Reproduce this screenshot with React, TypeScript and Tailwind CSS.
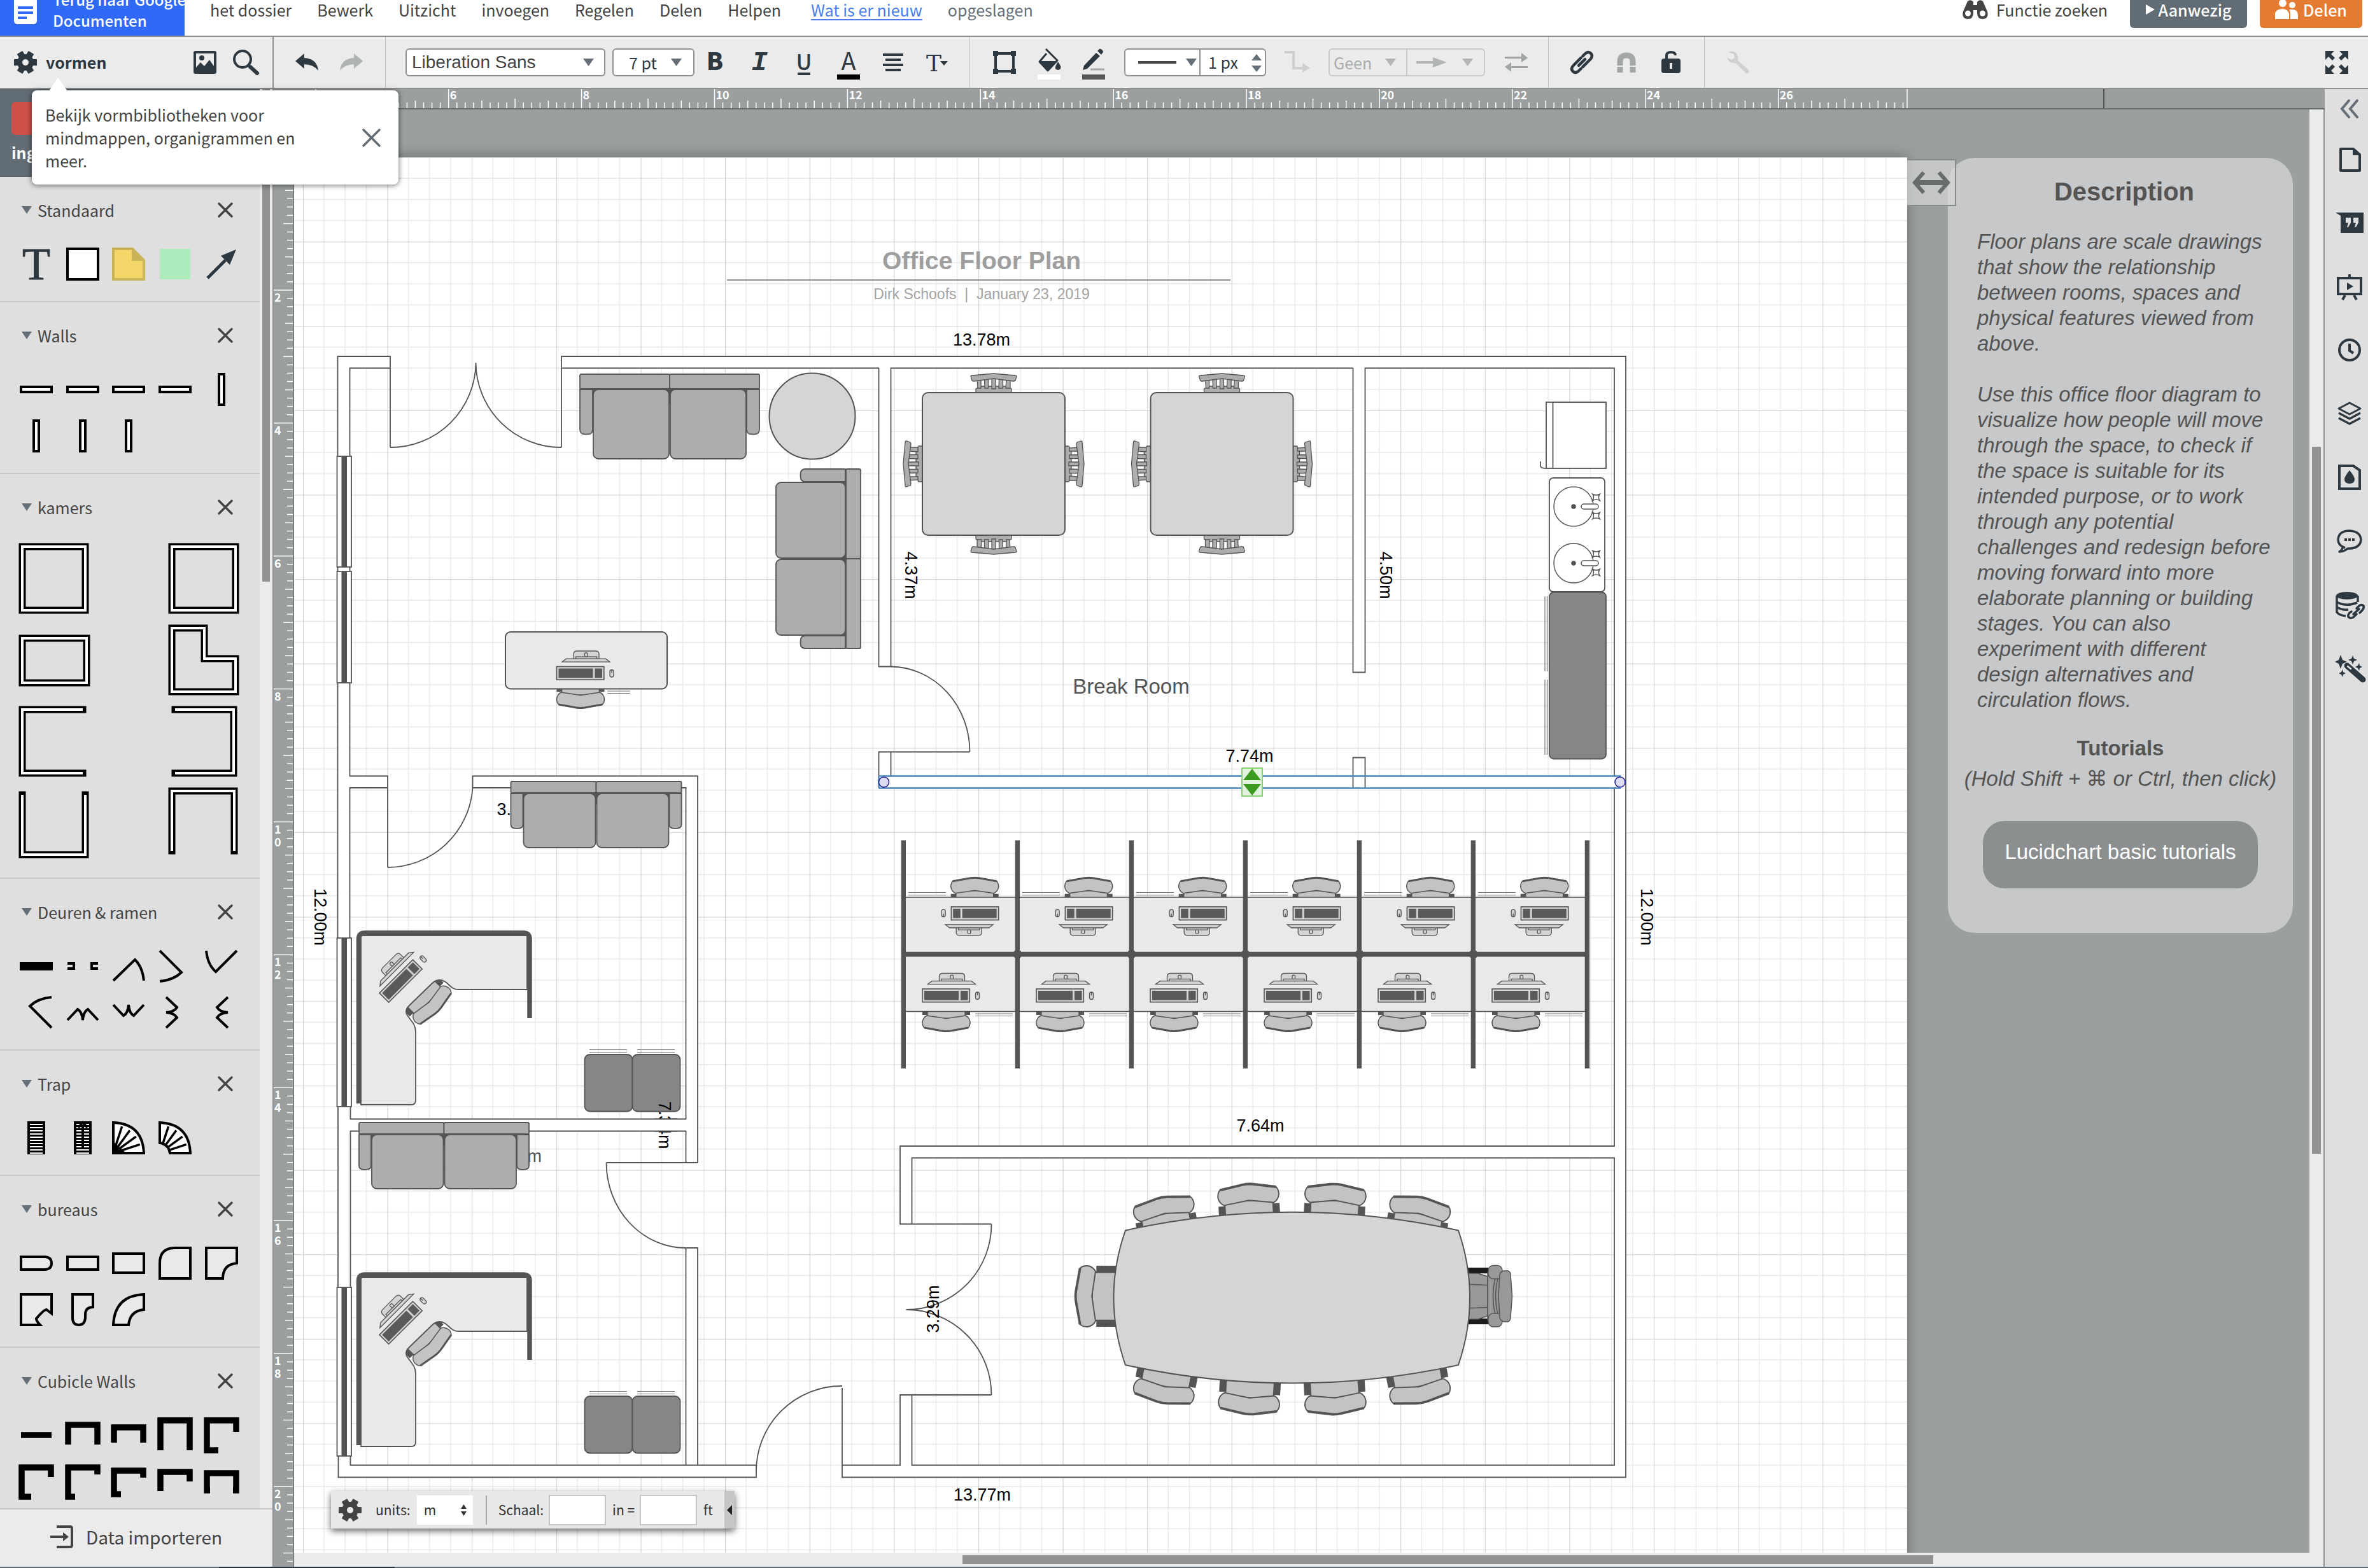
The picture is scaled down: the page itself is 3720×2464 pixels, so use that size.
import React from "react";

const UI = "font-['Noto_Sans_CJK_SC','Noto_Sans',sans-serif]";
const ARIAL = "font-['Liberation_Sans',Arial,sans-serif]";
const LINE = "#545454";
const INK = "#2e3840";

type Kids = { children?: React.ReactNode };

/* ---------- small building blocks ---------- */

function Icon({ w = 36, h = 36, children }: { w?: number; h?: number } & Kids) {
  return (
    <svg width={w} height={h} viewBox={`0 0 ${w} ${h}`} fill="none" aria-hidden="true" className="block shrink-0 overflow-visible">
      {children}
    </svg>
  );
}

function IconButton({ label, children, disabled }: { label: string; disabled?: boolean } & Kids) {
  return (
    <button type="button" aria-label={label} title={label} disabled={disabled} className="flex h-20 w-9 shrink-0 items-center justify-center">
      {children}
    </button>
  );
}

function Caret({ color = "#666f78" }: { color?: string }) {
  return (
    <Icon w={17} h={12}>
      <path d="M0 0H17L8.5 12Z" fill={color} />
    </Icon>
  );
}

function Gear({ color = INK }: { color?: string }) {
  return (
    <Icon>
      <g fill={color}>
        {[30, 90, 150].map((a) => (
          <rect key={a} x="13" y="0" width="10" height="36" rx="1" transform={`rotate(${a} 18 18)`} />
        ))}
        <circle cx="18" cy="18" r="13" />
      </g>
      <circle cx="18" cy="18" r="5" fill="#ebebeb" />
    </Icon>
  );
}

function Cross({ size = 24, color = "#444" }: { size?: number; color?: string }) {
  return (
    <Icon w={size} h={size}>
      <path d={`M2 2L${size - 2} ${size - 2}M${size - 2} 2L2 ${size - 2}`} stroke={color} strokeWidth="3.5" strokeLinecap="round" />
    </Icon>
  );
}

/* ---------- header ---------- */

const MENU = ["het dossier", "Bewerk", "Uitzicht", "invoegen", "Regelen", "Delen", "Helpen"];

function Header() {
  return (
    <header className="flex h-14 shrink-0 items-end overflow-hidden bg-white text-[25px] leading-[30px] text-[#444]">
      <a href="#docs" className="flex h-[100px] w-[290px] shrink-0 items-end gap-[25px] bg-[#3069f6] pl-[22px] pb-2 text-[24px] font-medium leading-[33px] text-white">
        <span className="pb-[10px]">
          <Icon w={36} h={50}>
            <rect width="36" height="50" rx="5" fill="#fff" />
            <path d="M6 24H30M6 32H30M6 40H20" stroke="#3069f6" strokeWidth="4" />
          </Icon>
        </span>
        <span className="whitespace-nowrap">
          Terug naar Google
          <br />
          Documenten
        </span>
      </a>
      <nav className="flex items-center pb-[26px] pl-10">
        <ul className="flex gap-10">
          {MENU.map((m) => (
            <li key={m}>
              <button type="button">{m}</button>
            </li>
          ))}
        </ul>
        <a href="#new" className="ml-[47px] text-[#4a7eee] underline decoration-2 underline-offset-4">
          Wat is er nieuw
        </a>
        <span className="ml-10 text-[#666f78]">opgeslagen</span>
      </nav>
      <div className="ml-auto flex items-end pr-[9px]">
        <button type="button" className="flex items-center gap-3 pb-[26px]">
          <Icon w={42} h={30}>
            <path d="M9 2Q14 -2 18 3V8H24V3Q28 -2 33 2L40 18Q43 29 33 30Q24 30 24 20V16H18V20Q18 30 9 30Q-1 29 2 18Z" fill="#444" />
            <circle cx="9.500" cy="21" r="4.500" fill="#fff" />
            <circle cx="32.500" cy="21" r="4.500" fill="#fff" />
          </Icon>
          Functie zoeken
        </button>
        <button type="button" className="mb-3 ml-[35px] flex h-[58px] w-[184px] items-center justify-center gap-[6px] rounded-[6px] bg-[#626c75] font-medium text-white">
          <Icon w={14} h={16}>
            <path d="M0 0L14 8L0 16Z" fill="#fff" />
          </Icon>
          Aanwezig
        </button>
        <button type="button" className="mb-3 ml-5 flex h-[58px] w-[161px] items-center justify-center gap-2 rounded-[6px] bg-[#e47b30] font-medium text-white">
          <Icon w={36} h={30}>
            <g fill="#fff">
              <circle cx="12" cy="5" r="6" />
              <circle cx="27" cy="8" r="5" />
              <path d="M0 30V22Q1 14 12 14Q20 14 22 22V30Z" />
              <path d="M24 30V22Q24 18 22 15Q36 13 36 24V30Z" />
            </g>
          </Icon>
          Delen
        </button>
      </div>
    </header>
  );
}

/* ---------- toolbar ---------- */

function GlyphIcon({ ch, cls, children }: { ch: string; cls: string } & Kids) {
  return (
    <Icon w={36} h={48}>
      <text x="18" y="36" textAnchor="middle" fill={INK} className={cls}>
        {ch}
      </text>
      {children}
    </Icon>
  );
}

function Toolbar() {
  return (
    <div role="toolbar" aria-label="Opmaak" className="flex h-21 shrink-0 items-stretch border-y-2 border-[#8e9091] bg-[#ebebeb] text-[25px] text-[#2e3840]">
      <div className="flex w-[430px] shrink-0 items-center border-r-2 border-[#8e9091] pl-[22px] pr-6">
        <Gear />
        <span className="ml-[14px] font-bold">vormen</span>
        <div className="ml-auto flex gap-7">
          <IconButton label="Afbeelding">
            <Icon>
              <rect width="36" height="36" rx="3" fill={INK} />
              <rect x="4" y="4" width="28" height="28" fill="#ebebeb" />
              <circle cx="13" cy="11" r="4" fill={INK} />
              <path d="M4 32V26L11 18L17 24L25 14L32 24V32Z" fill={INK} />
            </Icon>
          </IconButton>
          <IconButton label="Zoeken">
            <Icon w={40} h={40}>
              <circle cx="15" cy="15" r="13" stroke={INK} strokeWidth="4" />
              <path d="M27 27L38 37" stroke={INK} strokeWidth="6" strokeLinecap="round" />
            </Icon>
          </IconButton>
        </div>
      </div>
      <div className="flex w-[176px] shrink-0 items-center gap-[34px] border-r border-[#bfbfbf] pl-[34px]">
        <IconButton label="Ongedaan maken">
          <Icon h={28}>
            <path d="M0 12L14 0V7Q34 8 36 27Q28 17 14 17V24Z" fill={INK} />
          </Icon>
        </IconButton>
        <IconButton label="Opnieuw" disabled>
          <Icon h={28}>
            <path d="M36 12L22 0V7Q2 8 0 27Q8 17 22 17V24Z" fill="#b0b3b3" />
          </Icon>
        </IconButton>
      </div>
      <div className="flex shrink-0 items-center border-r border-[#bfbfbf] pl-[31px] pr-8">
        <div className="relative">
          <select aria-label="Lettertype" className={`h-11 w-[314px] appearance-none rounded-[6px] border-2 border-[#8e9091] bg-white pl-2 text-[28px] leading-8 text-[#444] ${ARIAL}`}>
            <option>Liberation Sans</option>
          </select>
          <span className="pointer-events-none absolute right-[18px] top-4">
            <Caret />
          </span>
        </div>
        <div className="relative ml-[11px]">
          <select aria-label="Tekengrootte" className="h-11 w-[129px] appearance-none rounded-[6px] border-2 border-[#8e9091] bg-white pl-6 text-[25px] leading-8">
            <option>7 pt</option>
          </select>
          <span className="pointer-events-none absolute right-5 top-4">
            <Caret />
          </span>
        </div>
        <div className="ml-[14px] flex gap-[34px]">
          <IconButton label="Vet">
            <GlyphIcon ch="B" cls="font-['Noto_Sans_CJK_SC'] text-[38px] font-black" />
          </IconButton>
          <IconButton label="Cursief">
            <GlyphIcon ch="I" cls="font-['Liberation_Mono'] text-[42px] font-bold italic" />
          </IconButton>
          <IconButton label="Onderstrepen">
            <GlyphIcon ch="U" cls="font-['Noto_Sans_CJK_SC'] text-[34px] font-medium">
              <path d="M8 42H28" stroke={INK} strokeWidth="4" />
            </GlyphIcon>
          </IconButton>
          <IconButton label="Tekstkleur">
            <GlyphIcon ch="A" cls="font-['Noto_Sans_CJK_SC'] text-[38px]">
              <rect y="43" width="36" height="8" fill="#000" />
            </GlyphIcon>
          </IconButton>
          <IconButton label="Uitlijnen">
            <Icon w={32} h={28}>
              <path d="M0 2H32M4 10H28M0 18H32M4 26H28" stroke={INK} strokeWidth="4" />
            </Icon>
          </IconButton>
          <IconButton label="Tekstopties">
            <Icon>
              <text x="12" y="32" textAnchor="middle" fill={INK} className="font-['DejaVu_Serif'] text-[36px]">
                T
              </text>
              <path d="M22 16H34L28 23Z" fill={INK} />
            </Icon>
          </IconButton>
        </div>
      </div>
      <div className="flex shrink-0 items-center border-r border-[#bfbfbf] pl-9 pr-8">
        <div className="flex gap-[34px]">
          <IconButton label="Vorm">
            <Icon>
              <rect x="4" y="4" width="28" height="28" stroke={INK} strokeWidth="4" />
              <path d="M0 0H8V8H0ZM28 0H36V8H28ZM0 28H8V36H0ZM28 28H36V36H28Z" fill={INK} />
            </Icon>
          </IconButton>
          <IconButton label="Vulkleur">
            <Icon w={36} h={46}>
              <path d="M13 2L31 20L16 36L3 22L14 9" stroke={INK} strokeWidth="3" strokeLinejoin="round" />
              <path d="M3 21H30L16 36Z" fill={INK} />
              <path d="M32 22Q38 30 36 33Q32 37 28 33Q27 30 32 22Z" fill={INK} />
              <rect y="42" width="36" height="8" fill="#fff" />
            </Icon>
          </IconButton>
          <IconButton label="Lijnkleur">
            <Icon w={36} h={46}>
              <path d="M22 8L28 13L8 33L1 35L3 28ZM24 5L27 2Q29 1 32 4Q34 7 32 8L30 11Z" fill={INK} />
              <path d="M13 34H35" stroke="#a4a7a8" strokeWidth="3" />
              <rect y="42" width="36" height="8" fill="#585858" />
            </Icon>
          </IconButton>
        </div>
        <div className="ml-[30px] flex h-11 w-[223px] overflow-hidden rounded-[6px] border-2 border-[#8e9091] bg-white">
          <button type="button" aria-label="Lijnstijl" className="flex w-[118px] items-center justify-between border-r-2 border-[#8e9091] pl-5 pr-1">
            <Icon w={60} h={4}>
              <path d="M0 2H60" stroke="#444" strokeWidth="4" />
            </Icon>
            <Caret />
          </button>
          <input aria-label="Lijndikte" defaultValue="1 px" className="w-[80px] bg-white pl-[12px] outline-none" />
          <Icon w={16} h={40}>
            <path d="M0 17L8 7L16 17ZM0 25H16L8 35Z" fill="#666f78" />
          </Icon>
        </div>
        <div className="ml-[29px]">
          <Icon w={40} h={36}>
            <path d="M0 2H14V27H30" stroke="#cdcfcf" strokeWidth="4" />
            <path d="M28 19L40 27L28 34Z" fill="#cdcfcf" />
          </Icon>
        </div>
        <div className="ml-[29px] flex h-11 w-[246px] rounded-[6px] border-2 border-[#c9caca] text-[#a9acad]">
          <div className="relative w-[122px] border-r-2 border-[#c9caca]">
            <select disabled aria-label="Lijnbegin" className="h-10 w-[118px] appearance-none bg-transparent pl-[6px] leading-8 opacity-100 disabled:opacity-100">
              <option>Geen</option>
            </select>
            <span className="pointer-events-none absolute right-4 top-[14px]">
              <Caret color="#b3b6b7" />
            </span>
          </div>
          <button type="button" disabled aria-label="Lijneinde" className="flex flex-1 items-center justify-between pl-[14px] pr-[17px]">
            <Icon w={48} h={16}>
              <path d="M0 6H26V0L48 8L26 16V10H0Z" fill="#b3b6b7" />
            </Icon>
            <Caret color="#b3b6b7" />
          </button>
        </div>
        <div className="ml-[31px]">
          <IconButton label="Omdraaien" disabled>
            <Icon h={30}>
              <path d="M0 6H26V0L36 8L26 15V9H0ZM36 24H10V30L0 22L10 15V21H36Z" fill="#9fa3a4" />
            </Icon>
          </IconButton>
        </div>
      </div>
      <div className="flex shrink-0 items-center gap-[34px] border-r border-[#bfbfbf] px-[34px]">
        <IconButton label="Koppeling">
          <Icon>
            <g transform="rotate(-45 18 18)" stroke={INK} strokeWidth="4.500">
              <path d="M22 12H6Q-2 12 -2 18Q-2 24 6 24H10" strokeLinecap="round" />
              <path d="M26 12H30Q38 12 38 18Q38 24 30 24H14" strokeLinecap="round" />
              <path d="M11 18H25" strokeLinecap="round" />
            </g>
          </Icon>
        </IconButton>
        <IconButton label="Magneet">
          <Icon w={30} h={32}>
            <path d="M5 32V15Q5 5 15 5Q25 5 25 15V32" stroke="#a4a7a8" strokeWidth="9" />
            <path d="M0 22H30" stroke="#ebebeb" strokeWidth="2" />
          </Icon>
        </IconButton>
        <IconButton label="Vergrendelen">
          <Icon w={30} h={36}>
            <rect y="12" width="30" height="23" rx="4" fill={INK} />
            <path d="M8 13V7Q8 2 15 2Q22 2 22 7" stroke={INK} strokeWidth="4" />
            <path d="M15 19V28" stroke="#ebebeb" strokeWidth="4" />
          </Icon>
        </IconButton>
      </div>
      <div className="flex flex-1 items-center justify-between pl-[34px] pr-[31px]">
        <IconButton label="Gereedschap" disabled>
          <Icon>
            <path d="M3 2Q14 -2 18 8Q19 12 18 15L35 30Q37 35 32 36L14 19Q4 20 1 10L8 14L13 11L12 5Z" fill="#cfd1d1" />
          </Icon>
        </IconButton>
        <IconButton label="Volledig scherm">
          <Icon>
            <path d="M0 0H14L9 5L15 11L11 15L5 9L0 14ZM36 0V14L31 9L25 15L21 11L27 5L22 0ZM0 36V22L5 27L11 21L15 25L9 31L14 36ZM36 36H22L27 31L21 25L25 21L31 27L36 22Z" fill={INK} />
          </Icon>
        </IconButton>
      </div>
    </div>
  );
}

/* ---------- shape library ---------- */

function Cell({ children }: Kids) {
  return (
    <li className="flex h-[73px] items-center justify-center">
      <svg width="60" height="60" viewBox="-30 -30 60 60" fill="none" aria-hidden="true" className="overflow-visible">
        {children}
      </svg>
    </li>
  );
}

function Section({ title, children, rooms }: { title: string; rooms?: boolean } & Kids) {
  return (
    <section className="shrink-0 border-b-2 border-[#c8c8c8] pb-[22px]">
      <div className="flex h-[100px] items-center justify-between pl-[34px] pr-[42px] pt-1">
        <h2 className="flex items-center gap-[9px] text-[25px] leading-9 text-[#444]">
          <Icon w={16} h={12}>
            <path d="M0 0H16L8 12Z" fill="#666f78" />
          </Icon>
          {title}
        </h2>
        <button type="button" aria-label={`${title} sluiten`}>
          <Cross />
        </button>
      </div>
      {rooms ? (
        <ul className="grid grid-cols-[auto_auto] justify-between pl-[30px] pr-8">{children}</ul>
      ) : (
        <ul className="grid grid-cols-5 pl-[21px] pr-6">{children}</ul>
      )}
    </section>
  );
}

function Room({ d }: { d: string }) {
  return (
    <li className="flex h-32 w-[112px] items-center">
      <svg width="112" height="110" viewBox="0 0 112 110" fill="none" aria-hidden="true" className="overflow-visible">
        <path d={d} stroke="#000" strokeWidth="11" strokeLinecap="square" />
        <path d={d} stroke="#fff" strokeWidth="4" />
      </svg>
    </li>
  );
}

const ROOMS = [
  "M5 5H104V105H5Z",
  "M6 5H106V105H6Z",
  "M5 21H106V91H5Z",
  "M6 5H57V53H106V105H6Z",
  "M100 5H5V105H100",
  "M11 5H103V105H11",
  "M5 11V105H104V11",
  "M6 99V5H104V99",
];

const DOORS = [
  "M-24 23L10 -10Q22 2 24 23",
  "M-24 -24L10 10Q-2 22 -24 24",
  "M-24 -24Q-22 -2 -9 9L24 -24",
  "M24 -24Q2 -22 -10 -10L24 24",
  "M-24 12L-8 -5Q-1 -1 0 12Q1 -1 8 -5L24 12",
  "M-24 -12L-8 5Q-1 1 0 -12Q1 1 8 5L24 -12",
  "M-14 -24L3 -8Q-1 -1 -14 0Q-1 1 3 8L-14 24",
  "M10 -24L-7 -8Q-3 -1 10 0Q-3 1 -7 8L10 24",
];

const DESKS = [
  "M-24 -10H14Q24 -9 24 0Q24 9 14 10H-24Z",
  "M-24 -10H24V10H-24Z",
  "M-24 -15H24V15H-24Z",
  "M-24 24V0Q-24 -24 0 -24H24V24Z",
  "M-24 -24H24V0Q2 2 2 24H-24Z",
  "M-24 -24H24V6L16 0Q12 0 0 14Q0 18 6 24H-24Z",
  "M-16 -24H16V-4Q4 -4 4 8V13Q3 24 -6 24Q-16 24 -16 13Z",
  "M-24 24Q-22 -22 24 -24V0Q2 2 0 24Z",
];

const CUBICLES = [
  "M-24 0H24",
  "M-23 15V-16H23V15",
  "M-23 12V-12H23V12",
  "M-23 24V-23H23V24",
  "M23 -5V-23H-23V24H-5",
  "M23 -7V-22H-23V24H-8",
  "M23 -11V-22H-23V24H-12",
  "M23 -6V-17H-23V20H-12",
  "M23 0V-15H-23V15",
  "M18 14H23V-13H-23V14H-18",
];

const RAYS = [0, 18, 36, 54, 72, 90];

function Sidebar() {
  return (
    <aside className="flex w-[430px] shrink-0 flex-col border-r-2 border-[#8e9091]">
      <div className="flex min-h-0 flex-1">
        <div className="flex min-w-0 flex-1 flex-col overflow-hidden bg-[#dfdfdf]">
          <div className="h-[138px] shrink-0 bg-[#626c75] pl-[18px] pt-5 text-[25px] font-bold text-white">
            <div className="h-[52px] w-[120px] rounded-[6px] bg-[#cd5149]" />
            <div className="mt-[9px] leading-9">ing</div>
          </div>
          <Section title="Standaard">
            <Cell>
              <text x="0" y="24" textAnchor="middle" fill={INK} className="font-['Liberation_Serif'] text-[72px] font-medium" stroke={INK} strokeWidth="1">
                T
              </text>
            </Cell>
            <Cell>
              <rect x="-24" y="-24" width="48" height="48" fill="#fff" stroke="#000" strokeWidth="4" />
            </Cell>
            <Cell>
              <path d="M-24 -24H6L24 -6V24H-24Z" fill="#f5d769" stroke="#c9b457" strokeWidth="4" />
              <path d="M5 -25V-5H25Z" fill="#c9b457" />
            </Cell>
            <Cell>
              <rect x="-24" y="-24" width="48" height="48" fill="#abebbc" />
            </Cell>
            <Cell>
              <path d="M-22 22L6 -6" stroke={INK} strokeWidth="5" />
              <path d="M23 -23L-1 -13L13 1Z" fill={INK} />
            </Cell>
          </Section>
          <Section title="Walls">
            {[0, 1, 2, 3].map((i) => (
              <Cell key={i}>
                <rect x="-24" y="-4" width="48" height="8" fill="#fff" stroke="#000" strokeWidth="4" />
              </Cell>
            ))}
            {[4, 5, 6, 7].map((i) => (
              <Cell key={i}>
                <rect x="-4" y="-24" width="8" height="48" fill="#fff" stroke="#000" strokeWidth="4" />
              </Cell>
            ))}
          </Section>
          <Section title="kamers" rooms>
            {ROOMS.map((d) => (
              <Room key={d} d={d} />
            ))}
          </Section>
          <Section title="Deuren &amp; ramen">
            <Cell>
              <rect x="-26" y="-6" width="52" height="13" fill="#000" />
            </Cell>
            <Cell>
              <path d="M-24 -4H-14V4H-24M24 -4H14V4H24" stroke="#000" strokeWidth="4" />
            </Cell>
            {DOORS.map((d) => (
              <Cell key={d}>
                <path d={d} stroke="#000" strokeWidth="4" />
              </Cell>
            ))}
          </Section>
          <Section title="Trap">
            {[0, 1].map((k) => (
              <Cell key={k}>
                <rect x="-14" y="-26" width="28" height="52" fill="#000" />
                {[0, 1, 2, 3, 4, 5, 6, 7, 8, 9].map((i) => (
                  <rect key={i} x="-10" y={-22 + i * 5} width="20" height="2" fill="#fff" />
                ))}
                {k === 1 && <path d="M0 16V-20M-7 -16L0 -24L7 -16" stroke="#000" strokeWidth="4" />}
              </Cell>
            ))}
            <Cell>
              <path d="M-24 24V-24Q22 -22 24 24Z" fill="#fff" stroke="#000" strokeWidth="4" />
              {RAYS.map((a) => (
                <path key={a} d="M-24 24H20" stroke="#000" strokeWidth="3.500" transform={`rotate(${-a} -24 24)`} />
              ))}
              <path d="M-24 24V6L-4 24Z" fill="#000" />
            </Cell>
            <Cell>
              <path d="M-24 8V-24Q22 -22 24 24H-8Q-10 10 -24 8Z" fill="#fff" stroke="#000" strokeWidth="4" />
              {RAYS.map((a) => (
                <path key={a} d="M-8 24H20" stroke="#000" strokeWidth="3.500" transform={`rotate(${-a} -24 24)`} />
              ))}
            </Cell>
          </Section>
          <Section title="bureaus">
            {DESKS.map((d) => (
              <Cell key={d}>
                <path d={d} fill="#e9e9e9" stroke="#000" strokeWidth="4" />
              </Cell>
            ))}
          </Section>
          <Section title="Cubicle Walls">
            {CUBICLES.map((d) => (
              <Cell key={d}>
                <path d={d} stroke="#000" strokeWidth="9.500" />
              </Cell>
            ))}
          </Section>
        </div>
        <div className="w-5 shrink-0 bg-[#ebebeb] px-1">
          <div className="h-[774px] w-3 bg-[#919191]" />
        </div>
      </div>
      <button type="button" className="flex h-[92px] shrink-0 items-center justify-center gap-5 border-t-2 border-[#c8c8c8] bg-[#ebebeb] pb-1 text-[28px] text-[#444]">
        <Icon>
          <path d="M10 2H31Q34 2 34 5V31Q34 34 31 34H10M0 18H24" stroke="#444" strokeWidth="4" />
          <path d="M20 11L29 18L20 25Z" fill="#444" />
        </Icon>
        Data importeren
      </button>
    </aside>
  );
}

/* ---------- rulers ---------- */

const UNIT = 104.45;

function tickLen(i: number, full: number) {
  if (i % 16 === 0) return full;
  if (i % 8 === 0) return 15;
  if (i % 4 === 0) return 12;
  return 9;
}

function TopRuler() {
  return (
    <div className="h-8 shrink-0 overflow-hidden border-b-2 border-[#6b7070] bg-[#9b9f9f]">
      <svg width="3222" height="30" viewBox="430 0 3222 30" aria-hidden="true" className="block">
        {Array.from({ length: 224 }, (_, i) => {
          const x = 78 + (i * UNIT) / 8;
          return <path key={i} d={`M${x} 30V${30 - tickLen(i, 30)}`} stroke="#fff" strokeWidth="1.500" />;
        })}
        <path d="M2996 0V30" stroke="#fff" strokeWidth="1.500" />
        <path d="M3305 0V30" stroke="#555" strokeWidth="2" />
        {[4, 6, 8, 10, 12, 14, 16, 18, 20, 22, 24, 26].map((n) => (
          <text key={n} x={80 + n * UNIT} y="16" fill="#fff" className="text-[18px] font-bold">
            {n}
          </text>
        ))}
      </svg>
    </div>
  );
}

function LeftRuler() {
  return (
    <div className="w-8 shrink-0 overflow-hidden border-r-2 border-[#7a7e7e] bg-[#9b9f9f]">
      <svg width="30" height="2290" viewBox="0 172 30 2290" aria-hidden="true" className="block">
        {Array.from({ length: 170 }, (_, i) => {
          const y = 247 + (i * UNIT) / 8;
          return <path key={i} d={`M30 ${y}H${30 - tickLen(i, 30)}`} stroke="#fff" strokeWidth="1.500" />;
        })}
        {[2, 4, 6, 8, 10, 12, 14, 16, 18, 20].map((n) =>
          String(n)
            .split("")
            .map((c, k) => (
              <text key={`${n}-${k}`} x="1" y={247 + n * UNIT + 18 + k * 20} fill="#fff" className="text-[18px] font-bold">
                {c}
              </text>
            )),
        )}
      </svg>
    </div>
  );
}

/* ---------- furniture ---------- */

function Sofa({ w, h, at }: { w: number; h: number; at: string }) {
  const b = h * 0.173;
  const a = w * 0.071;
  const half = w / 2;
  return (
    <g transform={at} fill="#adadad" stroke={LINE} strokeWidth="1.800">
      <rect x={a} y={b} width={w - 2 * a} height={b} fill={LINE} stroke="none" />
      <rect width={half} height={b} rx="2" />
      <rect x={half} width={half} height={b} rx="2" />
      <path d={`M0 ${b + 1}H${a}V${h * 0.65}Q${a} ${h * 0.71} ${a * 0.6} ${h * 0.71}H${a * 0.4}Q0 ${h * 0.71} 0 ${h * 0.65}Z`} />
      <path d={`M${w - a} ${b + 1}H${w}V${h * 0.65}Q${w} ${h * 0.71} ${w - a * 0.4} ${h * 0.71}H${w - a * 0.6}Q${w - a} ${h * 0.71} ${w - a} ${h * 0.65}Z`} />
      <rect x={a + 1} y={b + 1} width={half - a - 2} height={h - b - 1} rx="8" />
      <rect x={half + 1} y={b + 1} width={half - a - 2} height={h - b - 1} rx="8" />
    </g>
  );
}

function OfficeChair() {
  return (
    <g stroke={LINE} strokeWidth="1.500" fill="#c3c3c3">
      <rect x="0" y="14" width="8" height="27" fill={LINE} stroke="none" />
      <rect x="67" y="14" width="8" height="27" fill={LINE} stroke="none" />
      <path d="M8 10H67V46H8Z" />
      <path d="M7 42L37.500 46.500L68 42Q74 45 75 52Q75 58 72 61L44 66Q37 67 31 66L3 61Q0 58 0 52Q1 45 7 42Z" />
      <path d="M3 61L31 66Q37 67 44 66L72 61" fill="none" strokeWidth="3" />
    </g>
  );
}

function Computer() {
  return (
    <g stroke={LINE} strokeWidth="1.300" fill="#d4d4d4">
      <path d="M26.500 -12V-20Q27 -24.500 32 -24.500H61Q66 -24.500 66.500 -20V-12" />
      <rect x="30" y="-15.500" width="33" height="3.500" />
      <rect x="44" y="-21.500" width="4.500" height="6" rx="1.500" />
      <path d="M8.500 -7.300H83.500L77 -12.300H15Z" />
      <rect width="74.300" height="20.700" strokeWidth="1.600" />
      <rect x="3" y="3" width="54" height="14.700" fill="#5a5a5a" stroke="none" />
      <rect x="60" y="3" width="11.500" height="14.700" fill="#5a5a5a" stroke="none" />
      <rect x="83.500" y="5" width="6" height="11.500" rx="3" />
      <path d="M86.500 5V10" />
    </g>
  );
}

function DinerChair() {
  return (
    <g stroke={LINE} strokeWidth="1.300" fill="#adadad">
      <path d="M9 32V24L18 20H56L65 24V32Z" />
      {[12, 23, 34, 45, 56].map((x, i) => (
        <path key={x} d={`M${x + (i - 2) * 0.5} 8H${x + 6 + (i - 2) * 0.5}V${i === 2 ? 24 : 23}H${x}Z`} />
      ))}
      <path d="M1 4Q1 3 3 3L37 0L71 3Q73 3 73 5L71 11Q70 12 68 12L37 8L6 12Q4 12 3 11Z" />
    </g>
  );
}

function DiningTable({ x }: { x: number }) {
  const cx = x + 112;
  return (
    <g>
      {[
        `translate(${cx - 37} 587)`,
        `translate(${cx + 37} 871) rotate(180)`,
        `translate(${x - 30} 766) rotate(-90)`,
        `translate(${x + 254} 692) rotate(90)`,
      ].map((t) => (
        <g key={t} transform={t}>
          <DinerChair />
        </g>
      ))}
      <rect x={x} y="617" width="224" height="224" rx="9" fill="#d5d5d5" stroke={LINE} strokeWidth="2" />
    </g>
  );
}

function CornerDesk({ y }: { y: number }) {
  return (
    <g transform={`translate(0 ${y})`}>
      <g transform="translate(614.800 1568.300) rotate(-45)">
        <OfficeChair />
      </g>
      <path d="M567 1470H828V1555H720C706 1555 704 1540 690 1540Q684 1540 678 1546L643 1580Q634 1589 641 1597C647 1606 653 1610 653 1622V1729Q653 1736 646 1736H567Z" fill="#e9e9e9" stroke={LINE} strokeWidth="1.800" />
      <path d="M563.500 1734V1476Q563.500 1466 573 1466H822Q832 1466 832 1476V1600" fill="none" stroke={LINE} strokeWidth="7.500" />
      <g transform="translate(596 1560.600) rotate(-45)">
        <Computer />
      </g>
      <g fill="#868686" stroke={LINE} strokeWidth="1.800">
        <rect x="918.500" y="1657" width="75" height="89.500" rx="8" />
        <rect x="993.500" y="1657" width="75" height="89.500" rx="8" />
      </g>
      <path d="M926 1649.500H985M926 1653.500H985M1001 1649.500H1060M1001 1653.500H1060" stroke="#777" strokeWidth="1.200" />
    </g>
  );
}

function Sink({ y }: { y: number }) {
  return (
    <g fill="#fff" stroke={LINE} strokeWidth="1.500">
      <circle cx="2472" cy={y} r="31" />
      {[y - 14.5, y + 14.5].map((s) => (
        <path key={s} d={`M2502 ${s - 5}Q2507.5 ${s - 2} 2513 ${s - 5}Q2510 ${s} 2513 ${s + 5}Q2507.5 ${s + 2} 2502 ${s + 5}Q2505 ${s} 2502 ${s - 5}Z`} />
      ))}
      <rect x="2484" y={y - 4} width="27" height="8" rx="4" />
      <circle cx="2472" cy={y} r="3" fill={LINE} />
    </g>
  );
}

function Cubicles() {
  return (
    <g>
      {[0, 1, 2, 3, 4, 5].map((i) => {
        const x = 1423 + i * 179;
        return (
          <g key={i}>
            <g transform={`translate(${x + 145.7} 1445.7) rotate(180)`}>
              <OfficeChair />
            </g>
            <g transform={`translate(${x + 26} 1554)`}>
              <OfficeChair />
            </g>
            <path d={`M${x + 4} 1402.5H${x + 63}M${x + 4} 1406.5H${x + 63}M${x + 109} 1593H${x + 168}M${x + 109} 1596.5H${x + 168}`} stroke="#777" strokeWidth="1.200" />
            <g fill="#e9e9e9" stroke={LINE} strokeWidth="1.500">
              <rect x={x - 2} y="1410" width="176" height="87" rx="4" />
              <rect x={x - 2} y="1502.500" width="176" height="87" rx="4" />
            </g>
            <g transform={`translate(${x + 145.7} 1445.7) rotate(180)`}>
              <Computer />
            </g>
            <g transform={`translate(${x + 26} 1554)`}>
              <Computer />
            </g>
          </g>
        );
      })}
      <path d="M1419 1499.500H2493" stroke={LINE} strokeWidth="7.500" />
      {[0, 1, 2, 3, 4, 5, 6].map((i) => (
        <g key={i} fill={LINE}>
          <rect x={1415.7 + i * 179} y="1320.500" width="7.300" height="358.500" />
          {i > 0 && i < 6 && <circle cx={1419.5 + i * 179} cy="1499.500" r="7" />}
        </g>
      ))}
    </g>
  );
}

const MEETING_CHAIRS: [number, number, number][] = [
  [1825, 1881, 169.5],
  [1960, 1860, 176.5],
  [2099, 1860, 183.5],
  [2234, 1881, 190.5],
  [1825, 2205, 10.5],
  [1961, 2223, 3.5],
  [2099, 2223, -3.5],
  [2234, 2205, -10.5],
  [1689, 2037, 90],
];

function MeetingTable() {
  return (
    <g>
      {MEETING_CHAIRS.map(([x, y, a]) => (
        <g key={`${x}-${y}`} transform={`translate(${x} ${y}) rotate(${a}) scale(1.28) translate(-37.5 -67)`}>
          <OfficeChair />
        </g>
      ))}
      <g stroke={LINE} strokeWidth="1.500" fill="#999">
        <path d="M2300 1992H2338V2001H2300ZM2300 2072H2338V2081H2300Z" fill="#1c1c1c" stroke="none" />
        <path d="M2300 2001H2322L2337 2006V2068L2322 2073H2300Z" />
        <path d="M2300 2018L2337 2019.500M2300 2056L2337 2054.500" />
        <path d="M2337 2000H2358V2074H2337Z" />
        <path d="M2349 2008Q2342 2037 2349 2066M2353 2008Q2346 2037 2353 2066" fill="none" />
        <rect x="2338" y="1988.500" width="22" height="21" rx="8" />
        <rect x="2338" y="2064" width="22" height="21" rx="8" />
        <path d="M2362 1997H2369Q2373 1999 2373 2003L2375.500 2037L2373 2071Q2372 2076 2369 2077H2362Q2356 2074 2356 2070L2354 2037L2356 2004Q2356 1999 2362 1997Z" />
      </g>
      <path d="M1768 1933.500Q2029 1876 2291 1933.500Q2327 2039 2291 2145Q2029 2202 1768 2145Q1731 2039 1768 1933.500Z" fill="#d5d5d5" stroke={LINE} strokeWidth="2" />
    </g>
  );
}

/* ---------- drawing ---------- */

function Label({ x, y, turn = 0, children }: { x: number; y: number; turn?: number } & Kids) {
  return (
    <text transform={`translate(${x} ${y}) rotate(${turn})`} textAnchor="middle" fill="#000" className="text-[27px]">
      {children}
    </text>
  );
}

const WALL_FILLS =
  "M530 560H613V579H549V1220H609V1238H549V1758H1078V1238H743V1220H1096V1827H1078V1777H550V2302H1187V2321H531Z" +
  "M882 560H2554V2321H1323V2302H1414V2192H1432V2302H2536V1820H1432V1923H1414V1801H2536V1238H1380V1182H1399V1220H2126V1191H2144V1220H2536V579H2144V1057H2126V579H1399V1047H1380V579H882Z" +
  "M1078 1961H1096V2302H1078Z";

const WALL_LINES =
  "M613 578.5H549.5V716M530.5 716V560H613V703M549.5 1073V1219.500H609V1363M530.5 1073V1474M609 1238H549.500V1474" +
  "M530.5 891V898M549.5 891V898" +
  "M742.5 1238V1219.5H1096V1827M742.5 1238H1077.5V1758.5H550.5V1740M531 1740V2023M550.5 2023V1777.500H1077.500V1827" +
  "M1096 1827H952.5M1077.5 2302.5V1961H1096V2302.5M531.5 2288V2321.5H1188V2302.5M550.5 2288V2302.5H1188" +
  "M882 703V560H2554V2321.5H1323V2181M882 578.5H1380.5V1047.5H1399.5V578.5H2125.5V1056.5H2144.5V578.5H2536V1219.5" +
  "M1380.5 1219.5V1181.5H1523.5M1399.5 1181.5V1219.5M2125.5 1238V1190.5H2144.5V1238M2536 1238V1801H1414V1923.5H1557.5M1432.5 1923.5V1819.5H2536V2302.5H1432.5V2192" +
  "M1323 2302.5H1414V2192H1557.5";

const DOOR_ARCS =
  "M613 703A134 134 0 0 0 747.5 570A134 134 0 0 0 882 703" +
  "M609 1363A134 134 0 0 0 742.5 1238" +
  "M1399.5 1047.5A125 134 0 0 1 1523.5 1181.5" +
  "M952.5 1827A125 134 0 0 0 1077.5 1961" +
  "M1557.5 1923.5A134 134 0 0 1 1423.5 2058A134 134 0 0 1 1557.5 2192" +
  "M1323 2178A134 134 0 0 0 1188 2315";

const WINDOWS = [
  [717, 174],
  [898, 175],
  [1474, 265],
  [2023, 265],
];

function FloorPlan() {
  return (
    <svg width="2918" height="2255" viewBox="78 247 2918 2255" fill="none" role="img" aria-label="Office Floor Plan" className={`block ${ARIAL}`}>
      <defs>
        <pattern id="grid" x="78" y="247" width="132.630" height="132.630" patternUnits="userSpaceOnUse">
          <path d="M33.160 0V132.630M66.320 0V132.630M99.480 0V132.630M0 33.160H132.630M0 66.320H132.630M0 99.480H132.630" stroke="#e8e8e8" strokeWidth="1.400" />
          <path d="M0.500 0V132.630M0 0.500H132.630" stroke="#cfcfcf" strokeWidth="1.200" />
        </pattern>
      </defs>
      <rect x="78" y="247" width="2918" height="2255" fill="url(#grid)" />

      <text x="1542" y="423" textAnchor="middle" fill="#9e9e9e" className="text-[39px] font-bold">
        Office Floor Plan
      </text>
      <path d="M1142 440H1933" stroke="#8f8f8f" strokeWidth="2" />
      <text x="1542" y="470" textAnchor="middle" fill="#a3a3a3" className="text-[23px]">
        {"Dirk Schoofs\u00a0 |\u00a0 January 23, 2019"}
      </text>

      <Label x={818} y={1281}>3.78m</Label>
      <text x="851" y="1826" textAnchor="end" fill="#545454" className="text-[27px]">
        3.78m
      </text>

      <path d={WALL_FILLS} fill="#fff" fillRule="evenodd" />
      <path d={WALL_LINES} stroke={LINE} strokeWidth="1.800" />
      <path d={DOOR_ARCS} stroke={LINE} strokeWidth="1.800" />
      {WINDOWS.map(([y, h]) => (
        <g key={y}>
          <rect x="529.500" y={y} width="22.500" height={h} fill="#fff" stroke={LINE} strokeWidth="1.800" />
          <rect x="536.500" y={y} width="8.500" height={h} fill={LINE} />
        </g>
      ))}

      <Sofa w={282} h={133} at="translate(911 588)" />
      <Sofa w={282} h={133} at="translate(1352 737) rotate(90)" />
      <Sofa w={268} h={104} at="translate(802.5 1228)" />
      <Sofa w={267} h={104} at="translate(564 1764)" />
      <circle cx="1276" cy="654" r="67.500" fill="#d5d5d5" stroke={LINE} strokeWidth="2" />

      <g transform="translate(874.5 1046)">
        <OfficeChair />
      </g>
      <rect x="794" y="993" width="254" height="89.500" rx="8" fill="#e9e9e9" stroke={LINE} strokeWidth="2" />
      <path d="M954 1086H990M954 1089.500H990" stroke="#777" strokeWidth="1.200" />
      <g transform="translate(874.5 1047.5)">
        <Computer />
      </g>

      <DiningTable x={1449} />
      <DiningTable x={1807.5} />

      <g fill="#fff" stroke={LINE} strokeWidth="1.800">
        <rect x="2429" y="632" width="94" height="104" />
        <path d="M2439.500 632V736M2420 725V732Q2420 736 2429 736" fill="none" />
        <rect x="2434" y="751" width="87" height="179" rx="6" />
        <rect x="2434" y="930.500" width="89" height="262" rx="7" fill="#868686" />
      </g>
      <path d="M2427 937V1055M2430.500 937V1055M2427 1068V1186M2430.500 1068V1186" stroke="#777" strokeWidth="1.200" />
      <Sink y={796} />
      <Sink y={885} />

      <CornerDesk y={0} />
      <CornerDesk y={537} />
      <Label x={1035} y={1768} turn={90}>7.34m</Label>
      <rect x="1028" y="1758.500" width="36" height="19" fill="#fff" />
      <path d="M1028 1758.500H1064M1028 1777.500H1064" stroke={LINE} strokeWidth="1.800" />
      <Cubicles />
      <MeetingTable />

      <text x="1777" y="1090" textAnchor="middle" fill="#545454" className="text-[33px]">
        Break Room
      </text>
      <Label x={1542} y={543}>13.78m</Label>
      <Label x={1543} y={2358}>13.77m</Label>
      <Label x={1980} y={1778}>7.64m</Label>
      <Label x={1963} y={1197}>7.74m</Label>
      <Label x={1422} y={904} turn={90}>4.37m</Label>
      <Label x={2168} y={904} turn={90}>4.50m</Label>
      <Label x={494} y={1441} turn={90}>12.00m</Label>
      <Label x={2578} y={1441} turn={90}>12.00m</Label>
      <Label x={1475} y={2057} turn={-90}>3.29m</Label>

      <path d="M1380.500 1219.500H2546M1380.500 1238.500H2546M1380.500 1219.500V1238.500" stroke="#4b86ba" strokeWidth="2.500" />
      {[1388.5, 2545].map((x) => (
        <circle key={x} cx={x} cy="1229" r="8" fill="#dcdcf0" stroke="#1b1b8f" strokeWidth="1.500" />
      ))}
      <rect x="1951" y="1207" width="32" height="44" fill="#e2f3dd" stroke="#83d470" strokeWidth="2" />
      <path d="M1967 1208L1981 1226H1953ZM1967 1250L1981 1232H1953Z" fill="#3c9a20" />
    </svg>
  );
}

function UnitsBar() {
  return (
    <form className="absolute bottom-[38px] left-[58px] flex h-[59px] items-center bg-[#e8e8e8] pl-3 text-[21px] text-[#333] shadow-[0_4px_10px_rgba(0,0,0,0.6)]" onSubmit={(e) => e.preventDefault()}>
      <Gear color="#444" />
      <label htmlFor="units" className="ml-[22px]">
        units:
      </label>
      <div className="relative ml-[10px]">
        <select id="units" className="h-[46px] w-[88px] appearance-none bg-white pl-[11px]">
          <option>m</option>
        </select>
        <span className="pointer-events-none absolute right-[10px] top-[14px]">
          <Icon w={9} h={18}>
            <path d="M0 7L4.500 0L9 7ZM0 11H9L4.500 18Z" fill="#333" />
          </Icon>
        </span>
      </div>
      <div className="ml-5 h-[46px] w-[2px] bg-[#aaa]" />
      <label htmlFor="scale-in" className="ml-[18px]">
        Schaal:
      </label>
      <input id="scale-in" className="ml-2 h-12 w-[90px] border-2 border-[#c6c6c6] bg-white px-2" />
      <label htmlFor="scale-ft" className="ml-[10px]">
        in =
      </label>
      <input id="scale-ft" className="ml-2 h-12 w-[90px] border-2 border-[#c6c6c6] bg-white px-2" />
      <span className="ml-[10px]">ft</span>
      <button type="button" aria-label="Inklappen" className="ml-[18px] flex h-full w-4 items-center justify-center bg-[#c6c6c6]">
        <Icon w={8} h={16}>
          <path d="M8 0V16L0 8Z" fill="#222" />
        </Icon>
      </button>
    </form>
  );
}

function Description() {
  return (
    <article className={`absolute left-[2598px] top-[76px] flex w-[542px] flex-col items-center rounded-[42px] bg-[#c6c8c9] pb-[70px] pt-[26px] text-[33px] leading-10 text-[#545454] ${ARIAL}`}>
      <h1 className="pl-3 text-[40px] font-bold leading-[54px]">Description</h1>
      <div className="mt-8 w-full pl-[46px] pr-[33px] italic">
        <p>Floor plans are scale drawings that show the relationship between rooms, spaces and physical features viewed from above.</p>
        <p className="mt-10">
          Use this office floor diagram to visualize how people will move through the space, to check if the space is suitable for its intended purpose, or to work through any potential challenges and redesign before moving forward into more elaborate planning or building stages. You can also experiment with different design alternatives and circulation flows.
        </p>
      </div>
      <h2 className="mt-9 font-bold">Tutorials</h2>
      <p className="mt-2 whitespace-nowrap italic">
        (Hold Shift + <span className="font-['DejaVu_Sans'] not-italic">⌘</span> or Ctrl, then click)
      </p>
      <button type="button" className="mt-[46px] flex h-[106px] w-[432px] items-center justify-center rounded-[34px] bg-[#8c8f90] pb-2 text-white">
        Lucidchart basic tutorials
      </button>
    </article>
  );
}

function Workspace() {
  return (
    <main className="flex min-w-0 flex-1 flex-col">
      <TopRuler />
      <div className="flex min-h-0 flex-1">
        <LeftRuler />
        <div className="flex min-w-0 flex-1 flex-col">
          <div className="relative min-h-0 flex-1 overflow-hidden bg-[#9b9f9f]">
            <div className="absolute left-[-384px] top-[75px] bg-white shadow-[0_0_20px_rgba(0,0,0,0.35)]">
              <FloorPlan />
            </div>
            <Description />
            <button type="button" aria-label="Paneel wisselen" className="absolute left-[2534px] top-[78px] flex h-[74px] w-[77px] items-center justify-center border-2 border-l-0 border-[#868a8a] bg-[#d4d7d4]/70">
              <Icon w={56} h={36}>
                <path d="M16 2L2 18L16 34M40 2L54 18L40 34" stroke="#686c6c" strokeWidth="6" />
                <path d="M4 18H52" stroke="#686c6c" strokeWidth="8" />
              </Icon>
            </button>
            <UnitsBar />
          </div>
          <div className="h-[22px] shrink-0 bg-[#ebebeb] py-1">
            <div className="ml-[1050px] h-[14px] w-[1525px] bg-[#919191]" />
          </div>
        </div>
        <div className="w-6 shrink-0 border-r-2 border-[#8e9091] bg-[#ebebeb] px-1">
          <div className="mt-[530px] h-[1111px] w-[14px] bg-[#919191]" />
        </div>
      </div>
    </main>
  );
}

/* ---------- right rail ---------- */

const RAIL: [string, React.ReactNode][] = [
  [
    "Pagina's",
    <>
      <path d="M6 4H26L36 13V38H6Z" stroke={INK} strokeWidth="4" strokeLinejoin="round" />
      <path d="M25 3V14H37Z" fill={INK} />
    </>,
  ],
  [
    "Citaten",
    <>
      <path d="M-2 4H42V36H6V9Z" fill={INK} />
      <path d="M14 12H22V20L18 27H16L18 20H14ZM26 12H34V20L30 27H28L30 20H26Z" fill="#dfdfdf" />
    </>,
  ],
  [
    "Presenteren",
    <>
      <path d="M2 7H38V32H2Z" stroke={INK} strokeWidth="4" />
      <path d="M20 6V1M13 34L9 41M27 34L31 41" stroke={INK} strokeWidth="4" />
      <path d="M16 14L26 20L16 26Z" fill={INK} />
    </>,
  ],
  [
    "Geschiedenis",
    <>
      <circle cx="20" cy="20" r="16" stroke={INK} strokeWidth="4" />
      <path d="M20 10V21L26 25" stroke={INK} strokeWidth="4" />
    </>,
  ],
  [
    "Lagen",
    <>
      <path d="M20 3L37 12L20 21L3 12Z" stroke={INK} strokeWidth="3" strokeLinejoin="round" />
      <path d="M3 19L20 28L37 19M3 27L20 36L37 27" stroke={INK} strokeWidth="3.500" strokeLinejoin="round" />
    </>,
  ],
  [
    "Thema",
    <>
      <path d="M4 2H26L36 9V38H4Z" stroke={INK} strokeWidth="4" />
      <path d="M20 9Q28 19 28 23Q28 30 20 30Q12 30 12 23Q12 19 20 9Z" fill={INK} />
    </>,
  ],
  [
    "Opmerkingen",
    <>
      <path d="M13 31Q2 27 2 18Q3 4 20 4Q37 5 38 18Q37 31 20 32L17 32Q11 37 4 37Q9 34 9 30" stroke={INK} strokeWidth="3.500" strokeLinejoin="round" />
      <path d="M12 18H16M18 18H22M24 18H28" stroke={INK} strokeWidth="4" />
    </>,
  ],
  [
    "Gegevens",
    <>
      <ellipse cx="16" cy="6" rx="17" ry="6" fill={INK} />
      <path d="M0 6V32Q4 37 14 38M33 6V16M0 16Q14 24 32 17M0 24Q8 29 18 28" stroke={INK} strokeWidth="3.500" />
      <path d="M23 31L20 33Q16 38 19 40Q23 43 27 39L31 35M31 26L35 22Q39 19 42 22Q43 26 40 29L36 33M26 35L35 27" stroke={INK} strokeWidth="3.500" strokeLinecap="round" />
    </>,
  ],
  [
    "Magie",
    <>
      <path d="M16 16L41 38" stroke={INK} strokeWidth="9" strokeLinecap="round" />
      <path d="M17 17L22 21" stroke="#dfdfdf" strokeWidth="2.500" strokeLinecap="round" />
      <path d="M6 -1L9 7L16 10L9 13L6 21L3 13L-3 10L3 7ZM25 0L27 5L32 7L27 9L25 14L23 9L18 7L23 5ZM35 12L36 16L40 18L36 20L35 24L33 20L29 18L33 16ZM9 22L10 26L14 28L10 30L9 34L7 30L3 28L7 26Z" fill={INK} />
    </>,
  ],
];

function RightRail() {
  return (
    <aside className="flex w-[68px] shrink-0 flex-col items-center bg-[#dfdfdf] pl-[10px]">
      <button type="button" aria-label="Uitklappen" className="flex h-[62px] items-center">
        <Icon w={28} h={30}>
          <path d="M13 2L2 15L13 28M26 2L15 15L26 28" stroke="#666f78" strokeWidth="4" strokeLinecap="round" />
        </Icon>
      </button>
      {RAIL.map(([label, art]) => (
        <button key={label} type="button" aria-label={label} title={label} className="flex h-[100px] shrink-0 items-center pb-1">
          <Icon w={40} h={40}>{art}</Icon>
        </button>
      ))}
    </aside>
  );
}

function ShapesTip() {
  return (
    <div role="dialog" aria-label="Tip" className="absolute left-[50px] top-[142px] flex h-[148px] w-[576px] items-center justify-between rounded-[8px] bg-white pl-[21px] pr-7 text-[25px] leading-9 text-[#444] shadow-[0_1px_8px_rgba(0,0,0,0.6)]">
      <span className="absolute -top-5 left-[27px]">
        <Icon w={30} h={21}>
          <path d="M0 21L14 0L29 21Z" fill="#fff" />
        </Icon>
      </span>
      <p className="w-[420px]">Bekijk vormbibliotheken voor mindmappen, organigrammen en meer.</p>
      <button type="button" aria-label="Sluiten">
        <Cross size={29} color="#626c75" />
      </button>
    </div>
  );
}

export default function App() {
  return (
    <div className={`relative flex h-screen flex-col overflow-hidden bg-[#ebebeb] ${UI}`}>
      <Header />
      <Toolbar />
      <div className="flex min-h-0 flex-1">
        <Sidebar />
        <Workspace />
        <RightRail />
      </div>
      <div className="flex h-[2px] shrink-0 bg-[#626c75]">
        <div className="ml-[344px] w-[276px] bg-[#26323c]" />
      </div>
      <ShapesTip />
    </div>
  );
}
